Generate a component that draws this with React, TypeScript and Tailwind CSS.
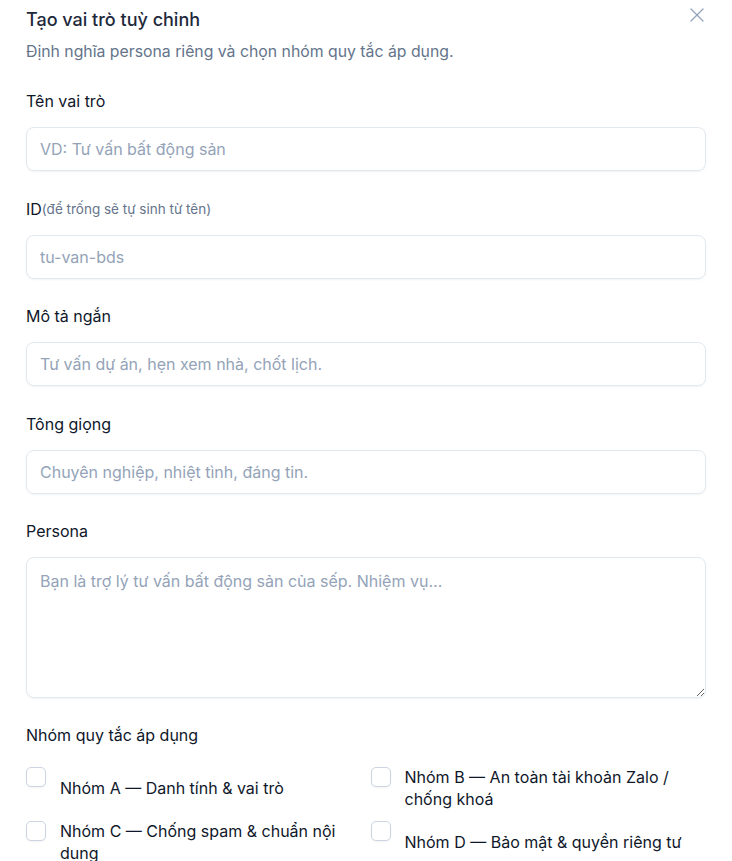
import { X } from "lucide-react";

const fields = [
  { label: "Tên vai trò", placeholder: "VD: Tư vấn bất động sản" },
  { label: "ID", hint: "(để trống sẽ tự sinh từ tên)", placeholder: "tu-van-bds" },
  { label: "Mô tả ngắn", placeholder: "Tư vấn dự án, hẹn xem nhà, chốt lịch." },
  { label: "Tông giọng", placeholder: "Chuyên nghiệp, nhiệt tình, đáng tin." },
];

const groups = [
  "Nhóm A — Danh tính & vai trò",
  "Nhóm B — An toàn tài khoản Zalo / chống khoá",
  "Nhóm C — Chống spam & chuẩn nội dung",
  "Nhóm D — Bảo mật & quyền riêng tư",
];

export default function App() {
  return (
    <div className="relative min-h-[861px] bg-white px-[26px] pt-[6px] font-['Inter',sans-serif] text-[#0f172a]">
      <button className="absolute right-[23px] top-[3px] text-[#94a3b8]">
        <X size={24} strokeWidth={1.3} />
      </button>

      {/* Header */}
      <h1 className="h-7 text-lg leading-7 font-medium text-[#1e293b]">Tạo vai trò tuỳ chỉnh</h1>
      <p className="mt-2 h-5 text-[15.8px] leading-5 text-[#64748b]">
        Định nghĩa persona riêng và chọn nhóm quy tắc áp dụng.
      </p>

      {/* Fields */}
      <div className="mt-[29px] flex flex-col gap-[27.5px]">
        {fields.map((f) => (
          <div key={f.label} className="flex flex-col gap-4">
            <label className="flex h-5 items-center text-base leading-5 text-[#0f172a]">
              {f.label}
              {f.hint && <span className="text-[13.5px] leading-5 text-[#64748b]">{f.hint}</span>}
            </label>
            <input
              placeholder={f.placeholder}
              className="h-11 w-full rounded-lg border border-[#e2e8f0] px-[13px] text-base shadow-[0_1px_2px_rgba(15,23,42,0.05)] outline-none placeholder:text-[#94a3b8]"
            />
          </div>
        ))}
        <div className="flex flex-col gap-4">
          <label className="h-5 text-base leading-5">Persona</label>
          <textarea
            placeholder="Bạn là trợ lý tư vấn bất động sản của sếp. Nhiệm vụ..."
            className="block h-[141px] w-full rounded-lg border border-[#e2e8f0] px-[13px] py-[13px] text-base leading-5 shadow-[0_1px_2px_rgba(15,23,42,0.05)] outline-none placeholder:text-[#94a3b8]"
          />
        </div>
      </div>

      {/* Rule groups */}
      <div className="mt-[27px] h-5 text-base leading-5">Nhóm quy tắc áp dụng</div>
      <div className="mt-[21px] grid grid-cols-2 gap-x-[9px] gap-y-[10px]">
        {groups.map((g) => (
          <label key={g} className="flex items-start gap-[14px]">
            <span className="mt-px size-5 shrink-0 rounded-[5px] border border-[#cbd5e1] bg-white shadow-[0_1px_2px_rgba(15,23,42,0.05)]" />
            <span className="self-center text-base leading-[22px] text-[#0f172a]">{g}</span>
          </label>
        ))}
      </div>
    </div>
  );
}
